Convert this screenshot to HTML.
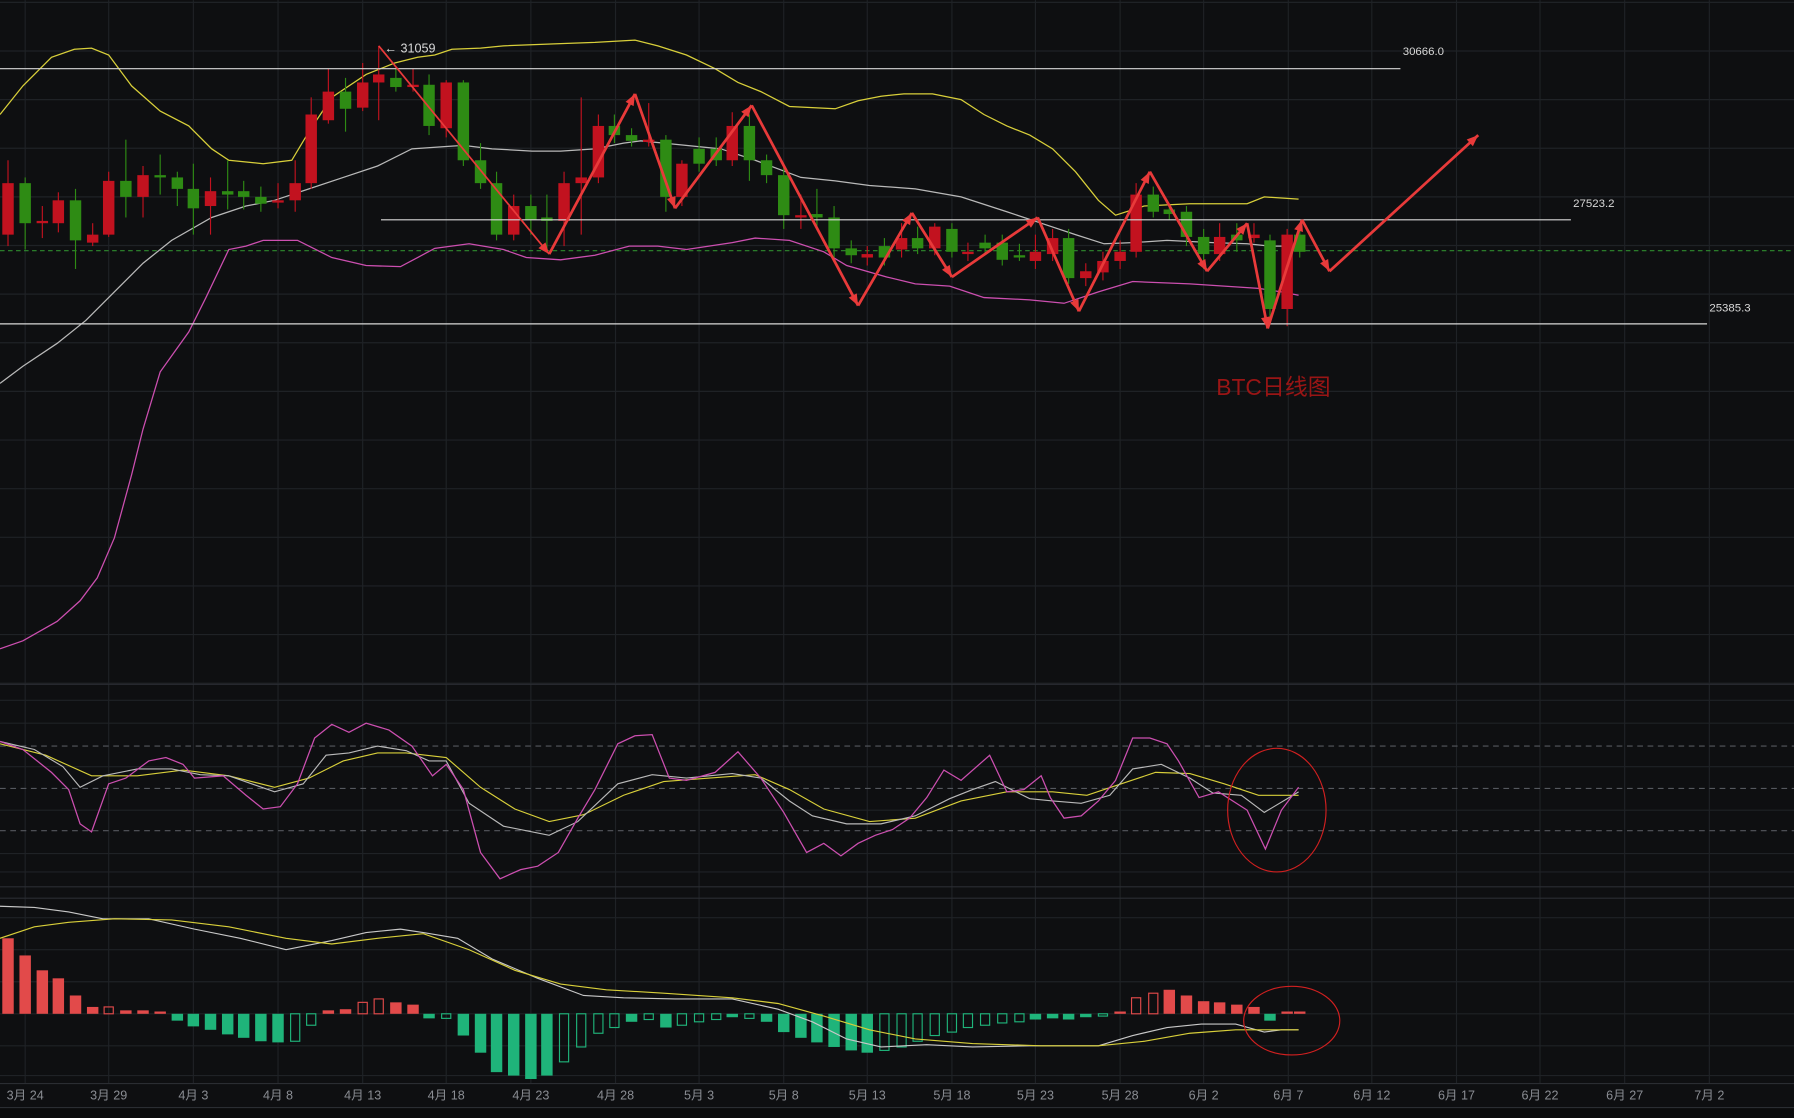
<!DOCTYPE html>
<html><head><meta charset="utf-8"><style>
html,body{margin:0;padding:0;background:#0e0f11;width:1794px;height:1118px;overflow:hidden}
svg{display:block}
text{font-family:"Liberation Sans","Noto Sans CJK SC",sans-serif}
</style></head><body>
<svg id="s" width="1794" height="1118" viewBox="0 0 1568 977" xmlns="http://www.w3.org/2000/svg"></svg>
<script>
var o=[];
function P(a){return a.map(function(p){return p[0]+','+p[1]}).join(' ')}
o.push('<rect width="1568" height="977" fill="#0e0f11"/>');
// grid
var vx=[22,95,169,243,317,390,464,538,611,685,758,832,905,979,1052,1126,1199,1273,1346,1420,1494];
vx.forEach(function(x){o.push('<line x1="'+x+'" y1="0" x2="'+x+'" y2="947" stroke="#1f2226" stroke-width="1"/>')});
for(var y=2;y<598;y+=42.5)o.push('<line x1="0" y1="'+y+'" x2="1568" y2="'+y+'" stroke="#1f2226"/>');
[612,632,670,708,746,762].forEach(function(y){o.push('<line x1="0" y1="'+y+'" x2="1568" y2="'+y+'" stroke="#1f2226"/>')});
[802,830,858,886,914,940].forEach(function(y){o.push('<line x1="0" y1="'+y+'" x2="1568" y2="'+y+'" stroke="#1f2226"/>')});
[598,775,785,947].forEach(function(y){o.push('<line x1="0" y1="'+y+'" x2="1568" y2="'+y+'" stroke="#2a2d32"/>')});
o.push('<rect x="0" y="968" width="1568" height="9" fill="#0a0b0c"/><line x1="0" y1="968" x2="1568" y2="968" stroke="#2a2d32"/>');
// dashed
o.push('<line x1="0" y1="219" x2="1568" y2="219" stroke="#2e8b2e" stroke-dasharray="4,3"/>');
[652,689,726].forEach(function(y){o.push('<line x1="0" y1="'+y+'" x2="1568" y2="'+y+'" stroke="#55585e" stroke-dasharray="5,4"/>')});
// bollinger
var Y=[[0,100],[20,75],[45,50],[65,43],[80,42],[95,48],[115,75],[140,97],[165,110],[185,130],[200,140],[230,143],[255,140],[270,115],[290,85],[320,65],[345,55],[365,50],[380,48],[395,43],[420,42],[440,40],[490,38],[520,37],[555,35],[575,40],[600,48],[625,60],[645,72],[665,80],[690,93],[730,95],[750,88],[770,84],[790,82],[815,82],[840,87],[860,100],[880,110],[900,118],[920,130],[940,150],[960,175],[975,188],[1000,180],[1040,178],[1090,178],[1105,172],[1135,174]];
var W=[[0,335],[20,320],[50,300],[75,280],[100,255],[125,230],[150,210],[185,190],[215,180],[240,175],[270,165],[300,155],[330,145],[360,130],[390,128],[405,127],[430,130],[465,132],[490,132],[520,130],[545,125],[560,123],[580,125],[630,130],[660,140],[700,155],[730,158],[760,162],[800,165],[840,172],[880,185],[910,195],[940,205],[965,213],[990,212],[1020,210],[1060,212],[1090,213],[1110,215],[1135,215]];
var M=[[0,567],[20,560],[50,543],[70,525],[85,505],[100,470],[115,415],[125,375],[140,325],[165,290],[180,260],[200,218],[215,215],[230,210],[260,210],[270,215],[290,225],[320,232],[350,233],[365,225],[380,217],[410,213],[440,218],[460,225],[490,227],[520,223],[550,215],[575,215],[600,218],[640,212],[660,208],[690,210],[720,220],[740,232],[775,242],[800,248],[830,250],[860,260],[900,262],[930,265],[960,255],[990,246],[1040,248],[1070,250],[1100,252],[1120,255],[1135,258]];
o.push('<polyline points="'+P(Y)+'" fill="none" stroke="#d8cf3a" stroke-width="1.1"/>');
o.push('<polyline points="'+P(W)+'" fill="none" stroke="#b9b9b9" stroke-width="1.1"/>');
o.push('<polyline points="'+P(M)+'" fill="none" stroke="#cc4fb0" stroke-width="1.1"/>');
// candles
var C=[[7,'R',160,205,140,215],[22,'G',160,195,155,218],[37,'R',193,195,180,208],[51,'R',175,195,168,203],[66,'G',175,210,165,235],[81,'R',205,212,195,215],[95,'R',158,205,150,207],[110,'G',158,172,122,190],[125,'R',153,172,145,190],[140,'G',153,155,135,170],[155,'G',155,165,150,180],[169,'G',165,182,143,205],[184,'R',167,180,155,205],[199,'G',167,170,140,183],[213,'G',167,172,158,183],[228,'G',172,178,163,185],[243,'R',175,177,160,182],[258,'R',160,175,140,185],[272,'R',100,160,85,165],[287,'R',80,105,60,108],[302,'G',80,95,68,115],[317,'R',72,94,55,97],[331,'R',65,72,40,105],[346,'G',68,76,60,80],[361,'R',74,76,60,80],[375,'G',74,110,65,118],[390,'R',72,112,70,120],[405,'G',72,140,70,145],[420,'G',140,160,125,165],[434,'G',160,205,150,210],[449,'R',180,205,170,210],[464,'G',180,192,170,205],[478,'G',190,193,170,220],[493,'R',160,193,150,215],[508,'R',155,160,85,205],[523,'R',110,155,100,160],[537,'G',110,118,100,125],[552,'G',118,123,112,128],[567,'R',122,124,90,128],[582,'G',122,172,118,185],[596,'R',143,172,140,180],[611,'G',130,143,120,150],[626,'G',130,140,120,145],[640,'R',110,140,98,145],[655,'G',110,140,100,158],[670,'G',140,153,135,160],[685,'G',153,188,145,200],[700,'R',188,190,170,200],[714,'G',187,190,165,200],[729,'G',190,217,180,225],[744,'G',217,223,210,230],[758,'R',222,225,215,232],[773,'G',215,225,208,232],[788,'R',208,218,195,225],[802,'G',208,217,198,222],[817,'R',198,217,195,223],[832,'G',200,220,195,225],[846,'R',220,222,212,228],[861,'G',212,217,205,222],[876,'G',212,227,205,232],[891,'G',223,225,213,228],[905,'R',220,228,205,235],[920,'R',208,222,200,228],[934,'G',208,243,200,248],[949,'R',237,243,230,250],[964,'R',228,238,220,245],[979,'R',220,228,210,235],[993,'R',170,220,160,225],[1008,'G',170,185,163,190],[1022,'G',183,187,178,192],[1037,'G',185,207,180,215],[1052,'G',207,222,200,235],[1066,'R',207,222,195,228],[1081,'G',205,210,195,220],[1096,'R',205,208,195,212],[1110,'G',210,270,205,283],[1125,'R',205,270,200,285],[1136,'G',205,220,195,225]];
C.forEach(function(c){var col=c[1]=='R'?'#c2121f':'#2e8b14';
o.push('<line x1="'+c[0]+'" y1="'+c[4]+'" x2="'+c[0]+'" y2="'+c[5]+'" stroke="'+col+'"/>');
o.push('<rect x="'+(c[0]-5)+'" y="'+c[2]+'" width="10" height="'+Math.max(2,c[3]-c[2])+'" fill="'+col+'"/>');});
// horizontal levels
o.push('<line x1="0" y1="60" x2="1224" y2="60" stroke="#d8d8d8"/><text x="1226" y="48" fill="#d8d8d8" font-size="10" font-family="Liberation Mono,monospace">30666.0</text>');
o.push('<line x1="333" y1="192" x2="1373" y2="192" stroke="#d8d8d8"/><text x="1375" y="181" fill="#d8d8d8" font-size="10" font-family="Liberation Mono,monospace">27523.2</text>');
o.push('<line x1="0" y1="283" x2="1492" y2="283" stroke="#d8d8d8"/><text x="1494" y="272" fill="#d8d8d8" font-size="10" font-family="Liberation Mono,monospace">25385.3</text>');
o.push('<text x="336" y="46" fill="#d8d8d8" font-size="11">← 31059</text>');
// arrows
var A=[[331,40],[480,222],[555,82],[590,182],[657,92],[750,267],[797,186],[832,242],[907,190],[943,272],[1005,150],[1055,237],[1090,195],[1108,287],[1138,192],[1162,237],[1292,118]];
for(var i=0;i<A.length-1;i++){var a=A[i],b=A[i+1];
o.push('<line x1="'+a[0]+'" y1="'+a[1]+'" x2="'+b[0]+'" y2="'+b[1]+'" stroke="#e83a3a" stroke-width="'+(i==0?1.5:2.4)+'"/>');
var dx=b[0]-a[0],dy=b[1]-a[1],L=Math.sqrt(dx*dx+dy*dy),ux=dx/L,uy=dy/L,s=10,w=4;
var bx=b[0]-ux*s,by=b[1]-uy*s;
o.push('<polygon points="'+b[0]+','+b[1]+' '+(bx-uy*w)+','+(by+ux*w)+' '+(bx+uy*w)+','+(by-ux*w)+'" fill="#e83a3a"/>');}
o.push('<text x="1063" y="345" fill="#9a1515" font-size="20">BTC日线图</text>');
// KDJ
var J=[[0,648],[20,655],[45,675],[60,690],[70,720],[80,727],[95,685],[110,680],[130,665],[145,662],[160,668],[170,680],[195,678],[215,695],[230,707],[245,705],[260,685],[275,645],[290,633],[305,640],[320,632],[340,638],[360,652],[378,678],[390,668],[405,690],[420,745],[437,768],[455,760],[470,757],[488,745],[505,715],[520,690],[540,650],[555,643],[570,642],[585,680],[600,682],[625,675],[645,657],[665,680],[685,710],[705,745],[720,737],[735,748],[750,737],[765,730],[780,725],[795,715],[810,697],[825,673],[840,682],[865,660],[880,692],[895,690],[910,678],[918,697],[930,715],[945,713],[960,700],[975,682],[990,645],[1005,645],[1020,650],[1030,665],[1048,697],[1065,692],[1090,708],[1106,742],[1120,708],[1135,688]];
var K=[[0,648],[30,655],[55,670],[70,688],[90,678],[120,672],[150,672],[175,677],[200,678],[240,692],[265,685],[285,660],[305,658],[330,652],[355,656],[375,665],[390,665],[410,702],[440,722],[480,730],[505,718],[540,685],[570,677],[600,680],[640,676],[665,680],[690,700],[710,713],[740,720],[770,720],[800,713],[830,698],[850,690],[870,683],[900,698],[920,700],[945,702],[970,695],[990,672],[1015,668],[1040,680],[1060,693],[1085,695],[1105,710],[1135,692]];
var D=[[0,650],[40,660],[80,678],[120,678],[160,673],[200,678],[240,688],[270,680],[300,665],[330,658],[355,658],[390,662],[420,688],[450,707],[480,718],[510,712],[545,695],[580,683],[620,680],[660,677],[690,690],[720,707],[760,718],[800,715],[840,700],[880,692],[920,692],[950,695],[980,685],[1010,675],[1040,676],[1070,685],[1100,695],[1135,695]];
o.push('<polyline points="'+P(D)+'" fill="none" stroke="#d8cf3a" stroke-width="1"/>');
o.push('<polyline points="'+P(K)+'" fill="none" stroke="#b9b9b9" stroke-width="1"/>');
o.push('<polyline points="'+P(J)+'" fill="none" stroke="#cc4fb0" stroke-width="1.1"/>');
o.push('<ellipse cx="1116" cy="708" rx="43" ry="54" fill="none" stroke="#d02020" stroke-width="1"/>');
// MACD histogram
var H=[[7,820,'R'],[22,835,'R'],[37,848,'R'],[51,855,'R'],[66,870,'R'],[81,880,'R'],[95,880,'r'],[110,883,'R'],[125,883,'R'],[140,884,'R'],[155,892,'G'],[169,897,'G'],[184,900,'G'],[199,904,'G'],[213,907,'G'],[228,910,'G'],[243,911,'G'],[258,910,'g'],[272,896,'g'],[287,883,'R'],[302,882,'R'],[317,876,'r'],[331,873,'r'],[346,876,'R'],[361,878,'R'],[375,890,'G'],[390,890,'g'],[405,905,'G'],[420,920,'G'],[434,937,'G'],[449,940,'G'],[464,943,'G'],[478,940,'G'],[493,928,'g'],[508,915,'g'],[523,903,'g'],[537,898,'g'],[552,893,'G'],[567,891,'g'],[582,898,'G'],[596,896,'g'],[611,893,'g'],[626,891,'g'],[640,889,'G'],[655,890,'g'],[670,893,'G'],[685,902,'G'],[700,907,'G'],[714,911,'G'],[729,915,'G'],[744,918,'G'],[758,920,'G'],[773,918,'g'],[788,915,'g'],[802,910,'g'],[817,905,'g'],[832,902,'g'],[846,898,'g'],[861,896,'g'],[876,894,'g'],[891,893,'g'],[905,891,'G'],[920,890,'G'],[934,891,'G'],[949,889,'G'],[964,888,'g'],[979,884,'R'],[993,872,'r'],[1008,868,'r'],[1022,865,'R'],[1037,870,'R'],[1052,875,'R'],[1066,876,'R'],[1081,878,'R'],[1096,880,'R'],[1110,892,'G'],[1125,884,'R'],[1136,884,'R']];
H.forEach(function(h){var up=h[1]<886,top=up?h[1]:886,ht=Math.max(2,Math.abs(h[1]-886));
var c=(h[2]=='R'||h[2]=='r')?'#e24a4a':'#1fb47a';
if(h[2]=='r'||h[2]=='g')o.push('<rect x="'+(h[0]-4)+'" y="'+top+'" width="8" height="'+ht+'" fill="none" stroke="'+c+'"/>');
else o.push('<rect x="'+(h[0]-5)+'" y="'+top+'" width="10" height="'+ht+'" fill="'+c+'"/>');});
var DIF=[[0,792],[30,793],[60,797],[90,803],[130,803],[170,812],[210,820],[250,830],[290,822],[320,815],[350,812],[370,815],[400,820],[430,838],[470,855],[510,870],[545,872],[590,873],[640,873],[680,882],[710,893],[740,908],[770,915],[810,913],[850,915],[900,914],[960,914],[990,905],[1020,898],[1050,895],[1080,895],[1105,902],[1120,900],[1135,900]];
var DEA=[[0,820],[30,810],[60,806],[100,803],[150,804],[200,810],[250,820],[290,825],[330,820],[370,816],[410,830],[450,848],[490,860],[530,865],[580,868],[640,872],[680,877],[720,888],[760,900],[800,908],[850,912],[910,914],[960,914],[1000,910],[1040,903],[1080,900],[1135,900]];
o.push('<polyline points="'+P(DIF)+'" fill="none" stroke="#c8c8c8" stroke-width="1"/>');
o.push('<polyline points="'+P(DEA)+'" fill="none" stroke="#d8cf3a" stroke-width="1"/>');
o.push('<ellipse cx="1129" cy="892" rx="42" ry="30" fill="none" stroke="#d02020" stroke-width="1"/>');
// dates
var L=['3月 24','3月 29','4月 3','4月 8','4月 13','4月 18','4月 23','4月 28','5月 3','5月 8','5月 13','5月 18','5月 23','5月 28','6月 2','6月 7','6月 12','6月 17','6月 22','6月 27','7月 2'];
L.forEach(function(t,i){o.push('<text x="'+vx[i]+'" y="961" fill="#8a8d93" font-size="11" text-anchor="middle">'+t+'</text>')});
document.getElementById('s').innerHTML=o.join('');
</script>
</body></html>
